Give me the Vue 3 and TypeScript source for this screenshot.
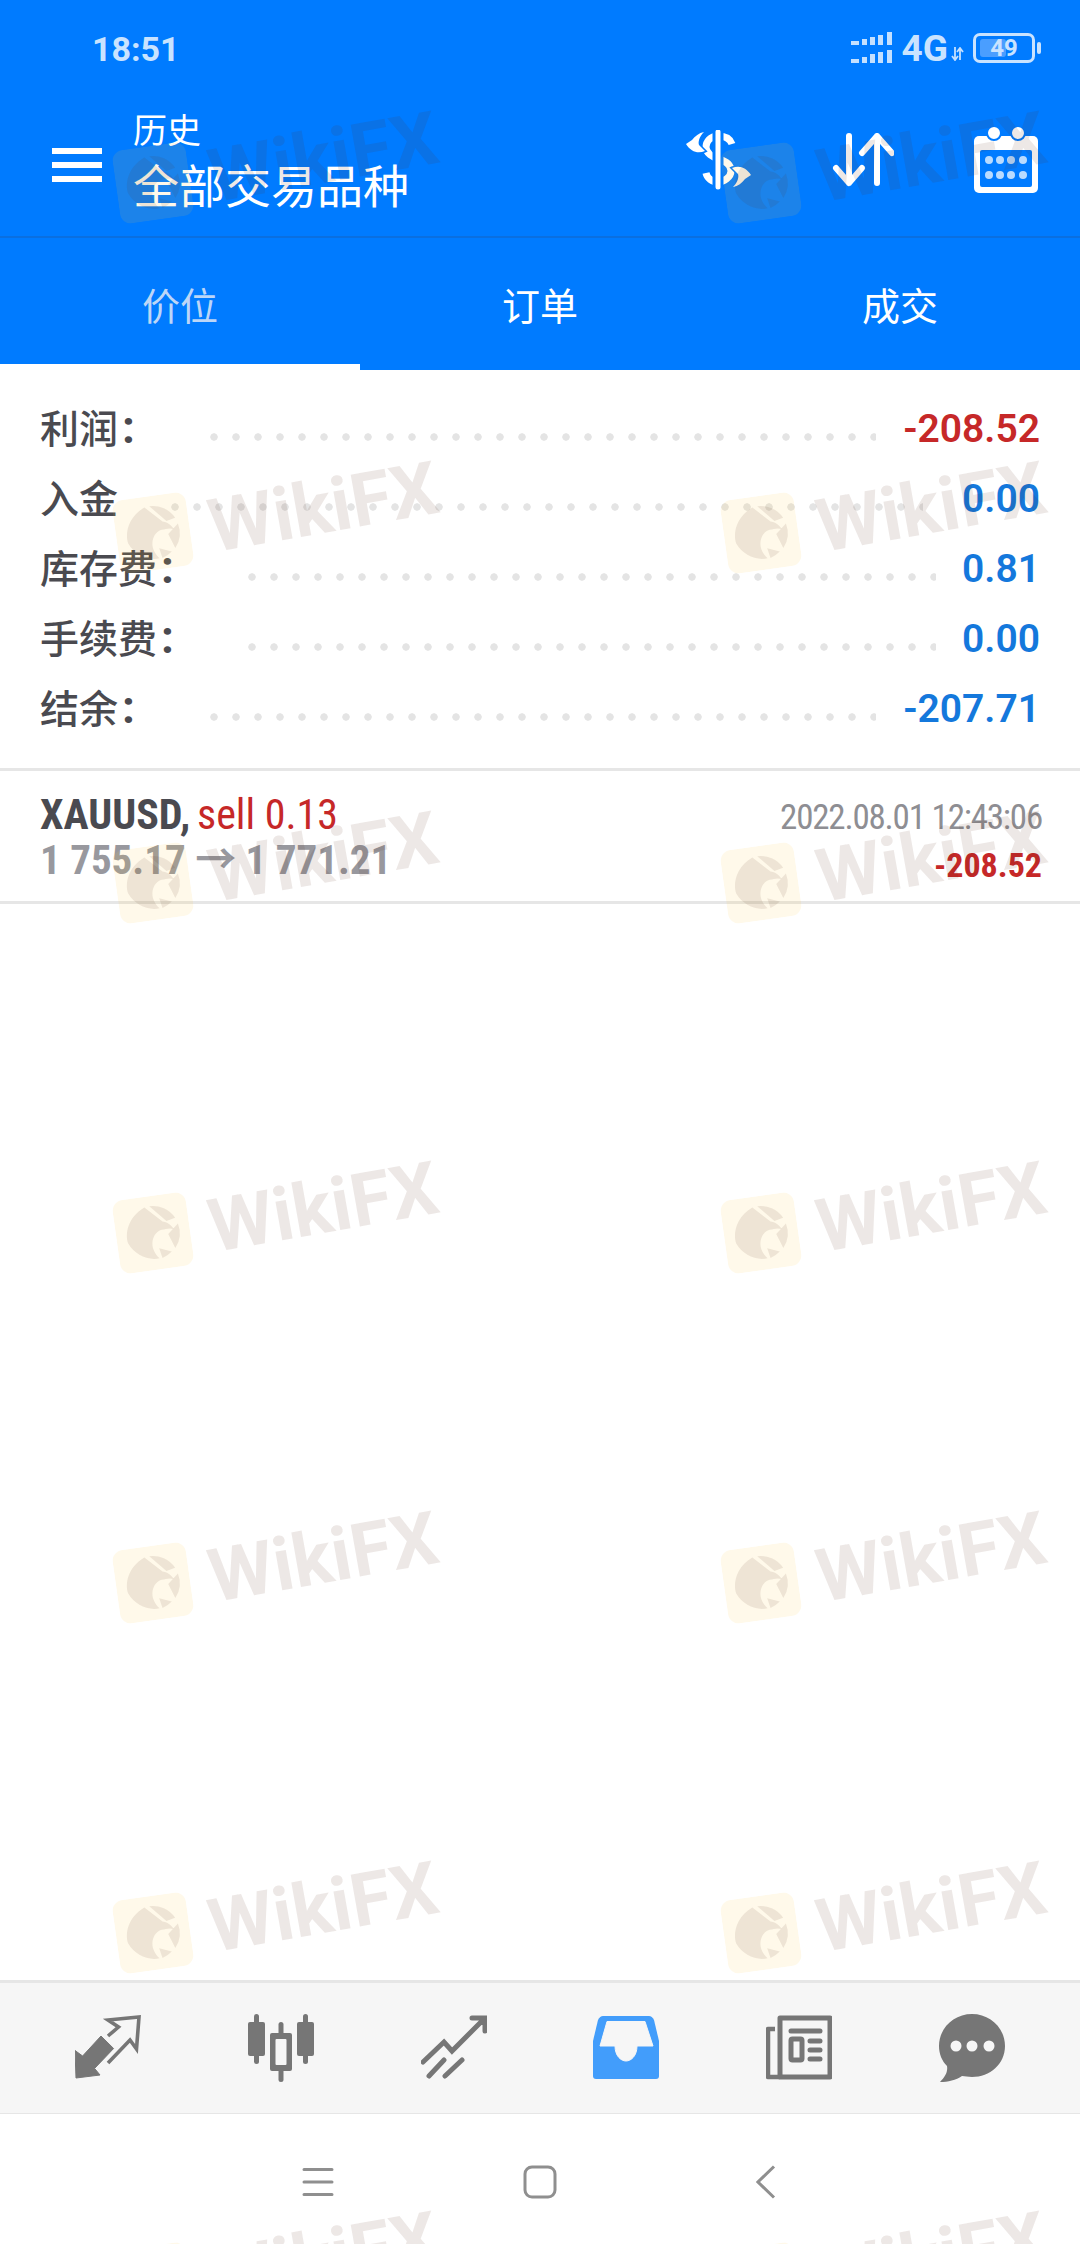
<script setup lang="ts">
const summary = [
  { label: '利润', colon: true, value: '-208.52', tone: 'red', kind: 'two' },
  { label: '入金', colon: false, value: '0.00', tone: 'blue', kind: 'plain' },
  { label: '库存费', colon: true, value: '0.81', tone: 'blue', kind: 'three' },
  { label: '手续费', colon: true, value: '0.00', tone: 'blue', kind: 'three' },
  { label: '结余', colon: true, value: '-207.71', tone: 'blue', kind: 'two' }
]
const tabs = ['价位', '订单', '成交']
const marks = Array.from({ length: 14 }, (_, i) => i)
</script>

<template>
  <div class="page">
    <div class="top">
      <div class="status">
        <span class="time">18:51</span>
        <div class="status-right">
          <svg class="signal" width="42" height="32" viewBox="0 0 42 32">
            <g fill="#c4e0ff">
              <rect x="0" y="9" width="8" height="4" /><rect x="11" y="7" width="5" height="6" /><rect x="19" y="5" width="5" height="8" /><rect x="27" y="3" width="5" height="10" /><rect x="36" y="0" width="5" height="13" />
              <rect x="0" y="27" width="8" height="4" /><rect x="11" y="25" width="5" height="6" /><rect x="19" y="22" width="5" height="9" /><rect x="27" y="20" width="5" height="11" /><rect x="36" y="18" width="5" height="13" />
            </g>
          </svg>
          <span class="net">4G</span>
          <svg class="updown" width="13" height="14" viewBox="0 0 13 14">
            <path d="M4 0V13M1 9l3 4 3-4M9 13V1M6 5l3-4 3 4" fill="none" stroke="#c4e0ff" stroke-width="1.8" />
          </svg>
          <div class="battery">
            <span class="battery-fill"></span>
            <span class="battery-num">49</span>
          </div>
          <span class="battery-tip"></span>
        </div>
      </div>

      <div class="toolbar">
        <div class="burger"><span></span><span></span><span></span></div>
        <div class="titles">
          <div class="title-small">历史</div>
          <div class="title-big">全部交易品种</div>
        </div>
        <div class="actions">
          <svg width="66" height="60" viewBox="0 0 66 60">
            <path d="M46 14C44 8 38 6 32 6C24 6 20 12 20 17C20 24 27 27 32 29C40 31 45 35 45 41C45 47 38 52 32 52C26 52 21 48 20 43" fill="none" stroke="#fff" stroke-width="7" />
            <path d="M32 0V60" stroke="#007bff" stroke-width="11" />
            <path d="M32 2V57" stroke="#fff" stroke-width="5" stroke-linecap="round" />
            <path d="M0 14L6 10C9 6 13 3 18 2C13 7 12 12 13 15L19 21C12 24 5 22 0 14Z" fill="#fff" stroke="#007bff" stroke-width="3" paint-order="stroke" />
            <path d="M0 14L6 10C9 6 13 3 18 2C13 7 12 12 13 15L19 21C12 24 5 22 0 14Z" fill="#fff" stroke="#007bff" stroke-width="3" paint-order="stroke" transform="rotate(180 32.5 29.5)" />
          </svg>
          <svg width="62" height="54" viewBox="0 0 62 54">
            <path d="M17 3V50M4 35L17 50L30 35M45 50V3M30 20L45 3L60 20" fill="none" stroke="#fff" stroke-width="6" stroke-linecap="round" stroke-linejoin="round" />
          </svg>
          <svg width="64" height="66" viewBox="0 0 64 66">
            <rect x="0" y="9" width="64" height="57" rx="5" fill="#fff" />
            <rect x="6" y="23" width="52" height="37" rx="2" fill="#007bff" />
            <circle cx="20" cy="6" r="7" fill="#fff" stroke="#007bff" stroke-width="2" />
            <circle cx="44" cy="6" r="7" fill="#fff" stroke="#007bff" stroke-width="2" />
            <g fill="#b9dbff">
              <circle cx="15" cy="33" r="4" /><circle cx="26" cy="33" r="4" /><circle cx="37" cy="33" r="4" /><circle cx="49" cy="33" r="4" />
              <circle cx="15" cy="48" r="4" /><circle cx="26" cy="48" r="4" /><circle cx="37" cy="48" r="4" /><circle cx="49" cy="48" r="4" />
            </g>
          </svg>
        </div>
      </div>

      <div class="tabs">
        <div v-for="(tab, i) in tabs" :key="tab" class="tab" :class="{ active: i === 0 }">{{ tab }}</div>
      </div>
    </div>

    <div class="content">
      <div class="summary">
        <div v-for="row in summary" :key="row.label" class="row" :class="row.kind">
          <span class="row-label">{{ row.label }}<span v-if="row.colon" class="colon">:</span></span>
          <span class="dots"></span>
          <span class="row-value" :class="row.tone">{{ row.value }}</span>
        </div>
      </div>

      <div class="trade">
        <div class="trade-line">
          <span><b class="symbol">XAUUSD,</b> <span class="side">sell 0.13</span></span>
          <span class="date">2022.08.01 12:43:06</span>
        </div>
        <div class="trade-line second">
          <span class="prices">1 755.17 → 1 771.21</span>
          <span class="pnl">-208.52</span>
        </div>
      </div>
    </div>

    <div class="bottom-tabs">
      <div class="bottom-tab">
        <svg width="66" height="66" viewBox="0 0 66 66">
          <path d="M0 35.5L7.6 41L26 21L38.6 33.5L19.6 53.4L25 60L1 63Z" fill="#767676" stroke="#767676" stroke-width="1" stroke-linejoin="round" />
          <path d="M33 21L43.5 12L33 5L64 2L61.5 34L55 25L33 48" fill="none" stroke="#767676" stroke-width="3.6" />
        </svg>
      </div>
      <div class="bottom-tab">
        <svg width="66" height="68" viewBox="0 0 66 68">
          <g fill="#767676">
            <rect x="6" y="0" width="5" height="50" rx="2.5" /><rect x="0" y="8" width="17" height="34" rx="2" />
            <rect x="55" y="0" width="5" height="50" rx="2.5" /><rect x="49" y="8" width="17" height="34" rx="2" />
            <rect x="30.500" y="8" width="5" height="60" rx="2.500" /><rect x="22" y="19" width="22" height="38" rx="2" />
          </g>
          <rect x="27.500" y="25" width="11" height="26" rx="1" fill="#f6f6f6" />
        </svg>
      </div>
      <div class="bottom-tab">
        <svg width="66" height="66" viewBox="0 0 66 66">
          <path d="M2 47L23 27L31 36L63 4M51 3H64V16M8 61L23 45M24 61L41 45" fill="none" stroke="#767676" stroke-width="5" stroke-linecap="round" />
        </svg>
      </div>
      <div class="bottom-tab">
        <svg width="66" height="66" viewBox="0 0 66 66">
          <path d="M10 1H56Q59 1 61 5L66 26V61Q66 64 63 64H3Q0 64 0 61V26L5 5Q7 1 10 1Z" fill="#429dfb" />
          <path d="M14 6.500H52L60 31H44C44 41 38 46 33 46C28 46 22 41 22 31H7Z" fill="#f6f6f6" stroke="#f6f6f6" stroke-linejoin="round" />
        </svg>
      </div>
      <div class="bottom-tab">
        <svg width="66" height="66" viewBox="0 0 66 66">
          <rect x="14" y="3" width="50" height="59" fill="none" stroke="#767676" stroke-width="5" stroke-linejoin="round" />
          <path d="M9 14H2V62H14" fill="none" stroke="#767676" stroke-width="4.500" stroke-linejoin="round" />
          <path d="M25 16H54M44 26H54M44 35H54M44 44H54" stroke="#767676" stroke-width="5" stroke-linecap="round" />
          <rect x="25" y="24" width="11" height="21" rx="1.500" fill="none" stroke="#767676" stroke-width="5" />
        </svg>
      </div>
      <div class="bottom-tab">
        <svg width="66" height="68" viewBox="0 0 66 68">
          <path d="M33 0C51 0 66 14 66 32C66 50 51 63 33 63C29 63 26 62 23 62C17 66 9 68 1 68C6 63 9 58 8 52C3 47 0 40 0 32C0 14 15 0 33 0Z" fill="#767676" />
          <circle cx="17" cy="32" r="5.500" fill="#f6f6f6" /><circle cx="33" cy="32" r="5.500" fill="#f6f6f6" /><circle cx="50" cy="32" r="5.500" fill="#f6f6f6" />
        </svg>
      </div>
    </div>

    <div class="sys-nav">
      <div class="sys-btn">
        <svg width="32" height="30" viewBox="0 0 32 30">
          <path d="M2 2.500H30M2 15H30M2 27.500H30" stroke="#8f8f8f" stroke-width="3" stroke-linecap="round" />
        </svg>
      </div>
      <div class="sys-btn">
        <svg width="34" height="34" viewBox="0 0 34 34">
          <rect x="2" y="2" width="30" height="30" rx="7" fill="none" stroke="#8f8f8f" stroke-width="3" />
        </svg>
      </div>
      <div class="sys-btn back">
        <svg width="20" height="34" viewBox="0 0 20 34">
          <path d="M18 1.500L2 17L18 32.500" fill="none" stroke="#8f8f8f" stroke-width="3" />
        </svg>
      </div>
    </div>

    <div class="watermarks">
      <div v-for="m in marks" :key="m" class="mark">
        <svg class="mark-logo" width="74" height="74" viewBox="0 0 74 74">
          <rect width="74" height="74" rx="11" fill="#ffc83c" fill-opacity="0.11" />
          <g fill="#5a321e" fill-opacity="0.1">
            <path d="M32 10.500L48 27C52 28 56 31 58 36C54 34 50 35 46 35C40 36 36 41 35 47C34 52 36 58 40 63C28 64 16 56 11 44C9 34 14 18 32 10.500Z" />
            <path d="M37 10A27 27 0 0 1 61 25L52 27Z" />
            <path d="M63 31A27 27 0 0 1 57 55L52 40Z" />
            <path d="M53 58A27 27 0 0 1 43 63L41 53Z" />
          </g>
        </svg>
        <span class="mark-text">WikiFX</span>
      </div>
    </div>
  </div>
</template>

<style scoped>
.page {
  position: relative;
  width: 1080px;
  height: 2244px;
  overflow: hidden;
  background: #fff;
  display: flex;
  flex-direction: column;
  font-family: Roboto, "Noto Sans CJK SC", sans-serif;
}

.top {
  background: #007bff;
  color: #fff;
}

.status {
  height: 68px;
  display: flex;
  align-items: flex-end;
  justify-content: space-between;
  padding: 0 39px 0 92px;
  color: #c9e3ff;
}

.time {
  font-size: 34px;
  font-weight: 700;
  line-height: 34px;
  margin-bottom: 2px;
}

.status-right {
  display: flex;
  align-items: center;
  height: 36px;
  margin-bottom: 2px;
}

.net {
  font-size: 37px;
  font-weight: 700;
  margin-left: 9px;
}

.updown {
  margin: 12px 0 0 3px;
}

.battery {
  position: relative;
  width: 62px;
  height: 30px;
  margin-left: 9px;
  border: 3px solid #c9e3ff;
  border-radius: 7px;
  box-sizing: border-box;
  display: flex;
  align-items: center;
  justify-content: center;
}

.battery-fill {
  position: absolute;
  left: 4px;
  top: 3px;
  bottom: 3px;
  width: 26px;
  background: #4a9eff;
  border-radius: 3px;
}

.battery-num {
  position: relative;
  font-size: 24px;
  font-weight: 700;
}

.battery-tip {
  width: 4px;
  height: 12px;
  margin-left: 2px;
  background: #c9e3ff;
  border-radius: 2px;
}

.toolbar {
  height: 170px;
  display: flex;
  align-items: center;
  box-sizing: border-box;
  border-bottom: 2px solid #0a6fe0;
  padding: 26px 42px 0 52px;
}

.burger {
  width: 50px;
  display: flex;
  flex-direction: column;
  gap: 8px;
  margin-right: 31px;
}

.burger span {
  height: 6px;
  background: #fff;
}

.titles {
  font-family: "Noto Sans CJK SC", sans-serif;
  flex: 1;
  margin-top: -6px;
}

.title-small {
  font-size: 34px;
  line-height: 42px;
}

.title-big {
  font-size: 46px;
  line-height: 66px;
}

.actions {
  display: flex;
  align-items: center;
  gap: 80px;
  margin-top: -10px;
}

.tabs {
  height: 132px;
  display: flex;
  font-family: "Noto Sans CJK SC", sans-serif;
}

.tab {
  flex: 1;
  display: flex;
  align-items: center;
  justify-content: center;
  font-size: 38px;
  padding-bottom: 2px;
}

.tab.active {
  color: #bcd6f7;
  box-shadow: inset 0 -6px 0 #fff;
}

.content {
  flex: 1;
}

.summary {
  padding: 24px 40px 24px;
  border-bottom: 3px solid #e6e6e6;
}

.row {
  height: 70px;
  display: flex;
  align-items: center;
}

.row-label {
  flex: none;
  font-family: "Noto Sans CJK SC", sans-serif;
  font-size: 39px;
  line-height: 50px;
  color: #4a4a50;
  font-weight: 500;
  margin-bottom: 6px;
}

.two .row-label {
  width: 169.500px;
}

.plain .row-label {
  width: 130.600px;
}

.three .row-label {
  width: 208.400px;
}

.colon {
  font-family: Roboto, sans-serif;
  font-size: 46px;
  font-weight: 700;
  line-height: 1;
  margin-left: 4px;
}

.dots {
  flex: 1;
  height: 8px;
  margin-top: 16px;
  background: radial-gradient(circle at 4px 4px, #e4e4e4 3.4px, transparent 4px) left top / 22px 8px repeat-x;
}

.two .dots {
  margin-right: 27px;
}

.plain .dots {
  margin-right: 39px;
}

.three .dots {
  margin-right: 26px;
}

.row-value {
  font-size: 39px;
  font-weight: 600;
}

.red {
  color: #c62828;
}

.blue {
  color: #1478dc;
}

.trade {
  height: 133px;
  padding: 0 38px 0 40px;
  box-sizing: border-box;
  border-bottom: 3px solid #e6e6e6;
  font-stretch: 75%;
}

.trade-line {
  display: flex;
  justify-content: space-between;
  align-items: baseline;
  height: 46px;
  line-height: 46px;
  padding-top: 21px;
}

.trade-line.second {
  padding-top: 0;
  height: 44px;
  line-height: 44px;
}

.symbol {
  color: #4a4a50;
  font-size: 42px;
  font-weight: 700;
}

.side {
  color: #c62828;
  font-size: 42px;
  margin-left: 3px;
}

.date {
  color: #8e8e93;
  font-size: 35px;
  letter-spacing: -1.200px;
}

.prices {
  color: #98989e;
  font-size: 41px;
  font-weight: 700;
}

.pnl {
  color: #c62828;
  font-size: 34px;
  font-weight: 700;
  position: relative;
  top: 3px;
}

.bottom-tabs {
  height: 134px;
  box-sizing: border-box;
  display: flex;
  padding: 0 22px;
  background: #f6f6f6;
  border-top: 3px solid #e6e6e6;
  border-bottom: 1px solid #e6e6e6;
}

.bottom-tab {
  flex: 1;
  display: flex;
  align-items: center;
  justify-content: center;
}

.sys-nav {
  height: 130px;
  display: flex;
  align-items: center;
  justify-content: center;
  padding-top: 6px;
  box-sizing: border-box;
}

.sys-btn {
  width: 222px;
  display: flex;
  justify-content: center;
}

.sys-btn.back {
  padding-left: 8px;
  box-sizing: border-box;
}

.watermarks {
  position: absolute;
  inset: 0;
  pointer-events: none;
  display: grid;
  grid-template-columns: 608px 300px;
  grid-auto-rows: 350px;
  padding: 142px 0 0 116px;
}

.mark {
  position: relative;
  height: 74px;
}

.mark-logo {
  position: absolute;
  left: 0;
  top: 4px;
  transform: rotate(-8deg);
}

.mark-text {
  position: absolute;
  left: 101px;
  top: -9px;
  font-family: Roboto, sans-serif;
  font-size: 74px;
  font-weight: 700;
  color: rgba(90, 50, 30, 0.11);
  transform: rotate(-10deg);
  transform-origin: left bottom;
}
</style>
